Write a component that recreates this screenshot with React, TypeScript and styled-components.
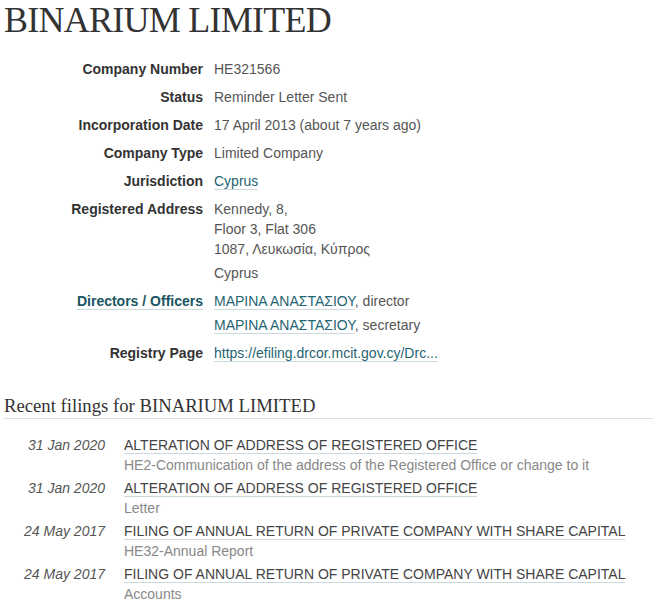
import React from "react";
import styled, { createGlobalStyle } from "styled-components";

const Global = createGlobalStyle`
  html, body { margin: 0; padding: 0; background: #fff; }
  body { font-family: "Liberation Sans", Arial, sans-serif; font-size: 14px; color: #444; }
`;

const Page = styled.div`
  padding: 0 0 0 4px;
`;

const Title = styled.h1`
  margin: 0;
  font-family: "Liberation Serif", "Times New Roman", serif;
  font-weight: normal;
  font-size: 36px;
  line-height: 40px;
  color: #333;
  letter-spacing: -0.75px;
`;

const Details = styled.dl`
  display: grid;
  grid-template-columns: 199px 1fr;
  column-gap: 11px;
  row-gap: 8px;
  margin: 19px 0 0 0;
  line-height: 20px;
`;

const Label = styled.dt<{ $link?: boolean }>`
  text-align: right;
  font-weight: bold;
  color: ${(p) => (p.$link ? "#185563" : "#333")};
  span {
    border-bottom: ${(p) => (p.$link ? "1px solid #c9d9dd" : "none")};
  }
`;

const Value = styled.dd`
  margin: 0;
  color: #555;
`;

const Line = styled.div<{ $gap?: number }>`
  margin-top: ${(p) => p.$gap ?? 0}px;
`;

const Link = styled.a`
  color: #1f6472;
  text-decoration: none;
  border-bottom: 1px solid #c9d9dd;
`;

const SectionHeading = styled.h2`
  margin: 33px 1px 0 0;
  font-family: "Liberation Serif", "Times New Roman", serif;
  font-weight: normal;
  font-size: 18.7px;
  line-height: 20px;
  color: #333;
  padding-bottom: 2px;
  border-bottom: 1px solid #dcdcdc;
`;

const Filings = styled.div`
  display: grid;
  grid-template-columns: 101px 1fr;
  column-gap: 19px;
  row-gap: 3px;
  margin-top: 16px;
  line-height: 20px;
`;

const FDate = styled.div`
  text-align: right;
  font-style: italic;
  color: #555;
`;

const FBody = styled.div``;

const FTitle = styled.div`
  color: #444;
  span {
    border-bottom: 1px solid #c9d9dd;
  }
`;

const FSub = styled.div`
  color: #888;
`;

const filings = [
  { date: "31 Jan 2020", title: "ALTERATION OF ADDRESS OF REGISTERED OFFICE", sub: "HE2-Communication of the address of the Registered Office or change to it" },
  { date: "31 Jan 2020", title: "ALTERATION OF ADDRESS OF REGISTERED OFFICE", sub: "Letter" },
  { date: "24 May 2017", title: "FILING OF ANNUAL RETURN OF PRIVATE COMPANY WITH SHARE CAPITAL", sub: "HE32-Annual Report" },
  { date: "24 May 2017", title: "FILING OF ANNUAL RETURN OF PRIVATE COMPANY WITH SHARE CAPITAL", sub: "Accounts" },
];

export default function App() {
  return (
    <Page>
      <Global />
      <Title>BINARIUM LIMITED</Title>
      <Details>
        <Label>Company Number</Label>
        <Value>HE321566</Value>
        <Label>Status</Label>
        <Value>Reminder Letter Sent</Value>
        <Label>Incorporation Date</Label>
        <Value>17 April 2013 (about 7 years ago)</Value>
        <Label>Company Type</Label>
        <Value>Limited Company</Value>
        <Label>Jurisdiction</Label>
        <Value><Link href="#">Cyprus</Link></Value>
        <Label>Registered Address</Label>
        <Value>
          <Line>Kennedy, 8,</Line>
          <Line>Floor 3, Flat 306</Line>
          <Line>1087, Λευκωσία, Κύπρος</Line>
          <Line $gap={4}>Cyprus</Line>
        </Value>
        <Label $link><span>Directors / Officers</span></Label>
        <Value>
          <Line><Link href="#">ΜΑΡΙΝΑ ΑΝΑΣΤΑΣΙΟΥ</Link>, director</Line>
          <Line $gap={4}><Link href="#">ΜΑΡΙΝΑ ΑΝΑΣΤΑΣΙΟΥ</Link>, secretary</Line>
        </Value>
        <Label>Registry Page</Label>
        <Value><Link href="#">https://efiling.drcor.mcit.gov.cy/Drc...</Link></Value>
      </Details>
      <SectionHeading>Recent filings for BINARIUM LIMITED</SectionHeading>
      <Filings>
        {filings.map((f, i) => (
          <React.Fragment key={i}>
            <FDate>{f.date}</FDate>
            <FBody>
              <FTitle><span>{f.title}</span></FTitle>
              <FSub>{f.sub}</FSub>
            </FBody>
          </React.Fragment>
        ))}
      </Filings>
    </Page>
  );
}
